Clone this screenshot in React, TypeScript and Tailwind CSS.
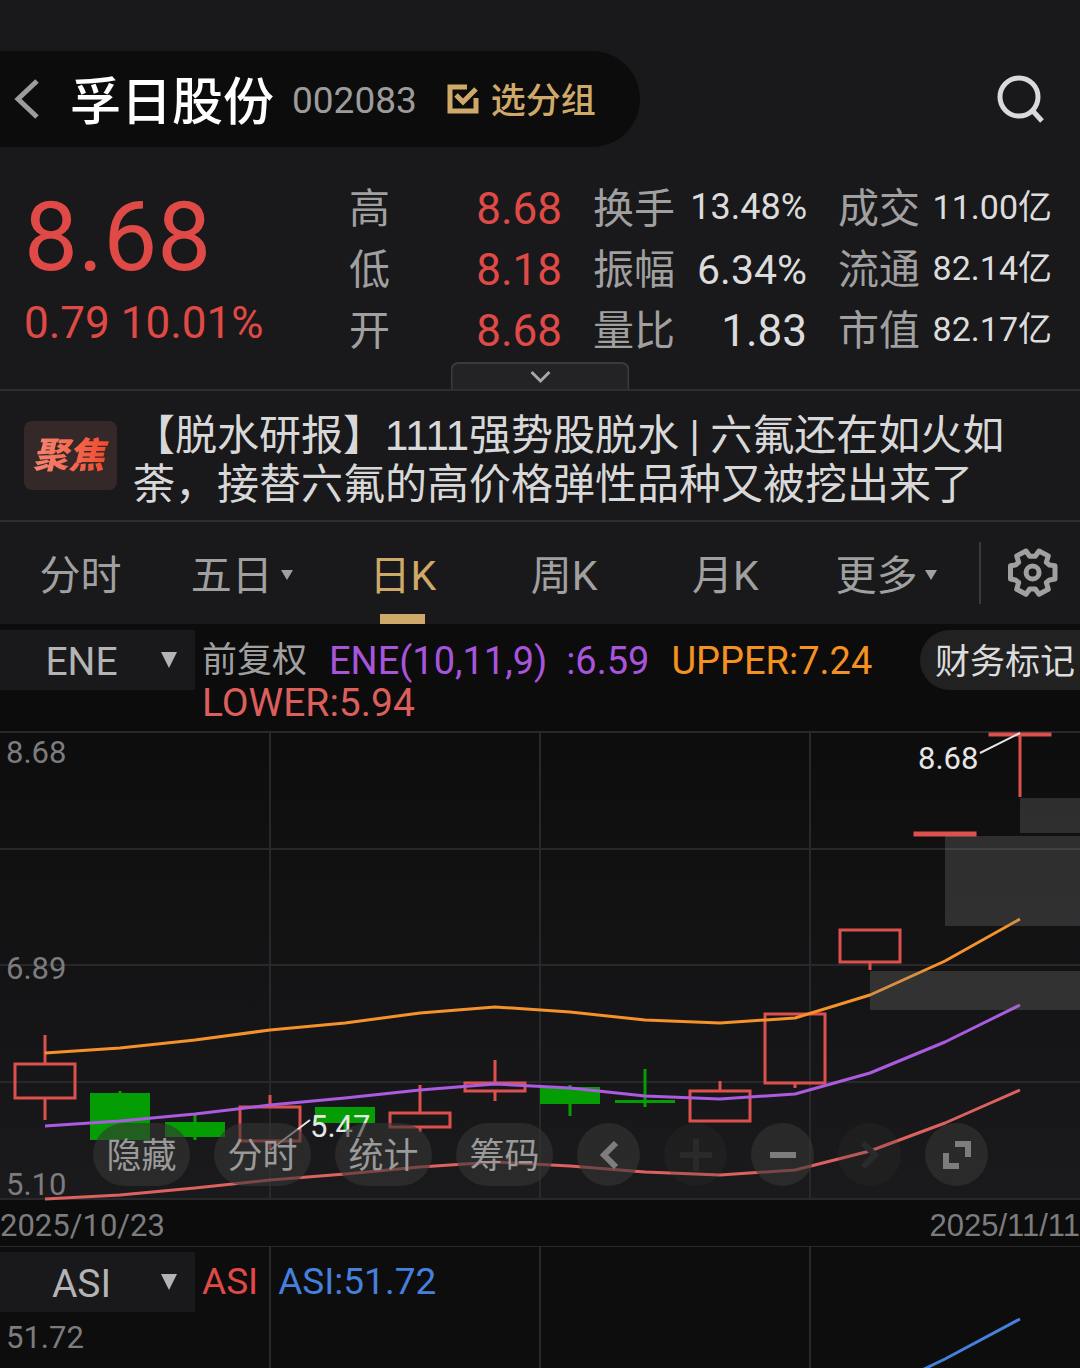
import { useState } from "react";

const stats = [
  [
    { label: "高", value: "8.68", size: "text-[44px]", tone: "text-[#e04a46]" },
    { label: "换手", value: "13.48%", size: "text-[36px]", tone: "text-[#dcdcdc]" },
    { label: "成交", value: "11.00亿", size: "text-[34px]", tone: "text-[#dcdcdc]" },
  ],
  [
    { label: "低", value: "8.18", size: "text-[44px]", tone: "text-[#e04a46]" },
    { label: "振幅", value: "6.34%", size: "text-[41px]", tone: "text-[#dcdcdc]" },
    { label: "流通", value: "82.14亿", size: "text-[34px]", tone: "text-[#dcdcdc]" },
  ],
  [
    { label: "开", value: "8.68", size: "text-[44px]", tone: "text-[#e04a46]" },
    { label: "量比", value: "1.83", size: "text-[44px]", tone: "text-[#dcdcdc]" },
    { label: "市值", value: "82.17亿", size: "text-[34px]", tone: "text-[#dcdcdc]" },
  ],
];

const tabs = [
  { label: "分时", menu: false },
  { label: "五日", menu: true },
  { label: "日K", menu: false },
  { label: "周K", menu: false },
  { label: "月K", menu: false },
  { label: "更多", menu: true },
];

type Candle = { x: number; top: number; bottom: number; high: number; low: number; up: boolean };

const candles: Candle[] = [
  { x: 45, top: 332, bottom: 366, high: 303, low: 388, up: true },
  { x: 120, top: 361, bottom: 408, high: 359, low: 408, up: false },
  { x: 195, top: 390, bottom: 405, high: 383, low: 408, up: false },
  { x: 270, top: 375, bottom: 409, high: 363, low: 418, up: true },
  { x: 345, top: 375, bottom: 391, high: 375, low: 399, up: false },
  { x: 420, top: 381, bottom: 395, high: 353, low: 400, up: true },
  { x: 495, top: 351, bottom: 359, high: 328, low: 369, up: true },
  { x: 570, top: 355, bottom: 372, high: 353, low: 384, up: false },
  { x: 645, top: 368, bottom: 371, high: 337, low: 375, up: false },
  { x: 720, top: 359, bottom: 389, high: 349, low: 389, up: true },
  { x: 795, top: 282, bottom: 351, high: 282, low: 356, up: true },
  { x: 870, top: 198, bottom: 230, high: 198, low: 238, up: true },
  { x: 945, top: 101, bottom: 103, high: 101, low: 103, up: true },
  { x: 1020, top: 2, bottom: 3, high: 2, low: 65, up: true },
];

const upper = [321, 316, 308, 298, 291, 281, 275, 280, 288, 291, 286, 263, 229, 187];
const middle = [394, 389, 382, 373, 366, 358, 352, 356, 364, 367, 362, 341, 310, 273];
const lower = [467, 463, 456, 448, 442, 435, 430, 434, 440, 443, 438, 419, 391, 358];

const toPoints = (ys: number[]) => ys.map((y, i) => `${45 + i * 75},${y}`).join(" ");

function CandleShape({ c }: { c: Candle }) {
  if (!c.up) {
    return (
      <g fill="#049d04">
        <rect x={c.x - 30} y={c.top} width={60} height={c.bottom - c.top} />
        <rect x={c.x - 1.5} y={c.high} width={3} height={c.low - c.high} />
      </g>
    );
  }
  return (
    <g fill="none" stroke="#dc504d" strokeWidth={3}>
      <rect x={c.x - 30} y={c.top} width={60} height={c.bottom - c.top} />
      {c.high < c.top && <path d={`M${c.x} ${c.high}V${c.top}`} />}
      {c.low > c.bottom && <path d={`M${c.x} ${c.bottom}V${c.low}`} />}
    </g>
  );
}

function PriceChart() {
  return (
    <svg viewBox="0 0 1080 468" className="block w-full overflow-visible" role="img" aria-label="日K">
      <defs>
        <linearGradient id="shade" x1="0" y1="0" x2="0" y2="1">
          <stop offset="0" stopColor="#0d0d0e" />
          <stop offset="1" stopColor="#1a1a1c" />
        </linearGradient>
      </defs>
      <rect width="1080" height="468" fill="url(#shade)" />
      <g stroke="#28282a" strokeWidth="2">
        <path d="M0 0H1080M0 117H1080M0 233H1080M0 350H1080M0 467H1080" />
        <path d="M270 0V468M540 0V468M810 0V468" />
      </g>
      {candles.map((c) => (
        <CandleShape key={c.x} c={c} />
      ))}
      <g fill="none" strokeWidth="3" strokeLinejoin="round">
        <polyline points={toPoints(upper)} stroke="#f5922a" />
        <polyline points={toPoints(middle)} stroke="#ab5be0" />
        <polyline points={toPoints(lower)} stroke="#dd615f" />
      </g>
      <g fill="#8c8c8c" fillOpacity="0.25">
        <rect x="1020" y="66" width="60" height="35" />
        <rect x="945" y="104" width="135" height="90" />
        <rect x="870" y="239" width="210" height="39" />
      </g>
      <g stroke="#e6e6e6" strokeWidth="2">
        <path d="M980 21L1020 1M310 388L270 418" />
      </g>
      <g className="text-[31px]" fill="#e6e6e6">
        <text x="918" y="37">8.68</text>
        <text x="310" y="405">5.47</text>
      </g>
      <g className="text-[31px]" fill="#7c7c7e">
        <text x="6" y="31">8.68</text>
        <text x="6" y="247">6.89</text>
        <text x="6" y="463">5.10</text>
      </g>
    </svg>
  );
}

function IndicatorSelect({ value, options }: { value: string; options: string[] }) {
  return (
    <div className="relative h-[60px] w-[195px] shrink-0 bg-[#19191b] text-[#b4b4b4]">
      <select
        aria-label={`${value} 指标`}
        defaultValue={value}
        className="h-full w-full appearance-none bg-transparent pt-1 pr-8 text-center text-[39px] leading-[56px] outline-none"
      >
        {options.map((o) => (
          <option key={o}>{o}</option>
        ))}
      </select>
      <svg viewBox="0 0 16 16" className="pointer-events-none absolute top-[22px] right-[18px] size-4" fill="currentColor">
        <path d="M0 0H16L8 16Z" />
      </svg>
    </div>
  );
}

const roundButton = "flex size-[63px] items-center justify-center rounded-full bg-[#353535]/60 text-[#7d7d7d]";
const fadedButton = "flex size-[63px] items-center justify-center rounded-full bg-[#353535]/20 text-[#2a2a2b]";

export default function App() {
  const [active, setActive] = useState("日K");
  return (
    <main className="min-h-screen w-full overflow-hidden bg-[#19191b] pt-[51px] font-['Roboto','Noto_Sans_CJK_SC',sans-serif] text-[#a0a0a0]">
      <header className="flex h-24 items-center justify-between pr-9">
        <div className="flex h-full w-[640px] items-center rounded-r-full bg-[#0c0c0c] pl-3.5">
          <button aria-label="返回">
            <svg viewBox="0 0 26 40" className="h-10 w-[26px]" fill="none" stroke="#9c9c9c" strokeWidth="5">
              <path d="M23 2L4 20L23 38" />
            </svg>
          </button>
          <h1 className="ml-[30px] pt-2 text-[51px] font-medium text-white">孚日股份</h1>
          <span className="ml-[18px] pt-1 text-[37px] text-[#9c9c9c]">002083</span>
          <button className="ml-[30px] flex items-center gap-3 text-[35px] font-medium text-[#cfa969]">
            <svg viewBox="0 0 32 32" className="size-8" fill="none" stroke="currentColor" strokeWidth="5">
              <path d="M20 4H3V28H29V15" />
              <path d="M9 12L16 19L29 6" />
            </svg>
            <span className="pt-1.5">选分组</span>
          </button>
        </div>
        <button aria-label="搜索">
          <svg viewBox="0 0 48 48" className="size-12" fill="none" stroke="#dadada" strokeWidth="5">
            <circle cx="23" cy="22" r="19" />
            <path d="M36 35L46 46" />
          </svg>
        </button>
      </header>

      <section className="relative flex h-[244px] border-b-2 border-[#2e2e30] pt-[31px] pr-7 pl-6">
        <div className="w-[325px] text-[#e04a46]">
          <p className="text-[96px] leading-[118px]">8.68</p>
          <p className="text-[44px] leading-[54px]">0.79 10.01%</p>
        </div>
        <dl className="flex-1">
          {stats.map((row) => (
            <div key={row[0].label} className="grid h-[61px] grid-cols-[213fr_214fr_214fr] items-center gap-x-[31px]">
              {row.map((s) => (
                <div key={s.label} className="flex items-start justify-between whitespace-nowrap">
                  <dt className="text-[41px] leading-[60px]">{s.label}</dt>
                  <dd className={`${s.size} ${s.tone} ${s.size === "text-[34px]" || s.size === "text-[36px]" ? "leading-[56px]" : "leading-[60px]"}`}>
                    {s.value}
                  </dd>
                </div>
              ))}
            </div>
          ))}
        </dl>
        <button
          aria-label="展开"
          className="absolute bottom-0 left-1/2 flex h-[27px] w-[179px] -translate-x-1/2 items-center justify-center rounded-t-lg border-2 border-b-0 border-[#3a3a3c] bg-[#232325]"
        >
          <svg viewBox="0 0 20 14" className="h-3.5 w-5" fill="none" stroke="#a8a8a8" strokeWidth="3">
            <path d="M1 2L10 11L19 2" />
          </svg>
        </button>
      </section>

      <a href="#news" className="flex h-[131px] items-center gap-4 border-b-2 border-[#2e2e30] px-6">
        <span className="flex h-[69px] w-[93px] shrink-0 items-center justify-center rounded-lg bg-[#342829]">
          <span className="bg-linear-to-r from-[#f58a78] to-[#f04423] bg-clip-text pr-2 pl-1 text-[36px] font-black text-transparent italic">
            聚焦
          </span>
        </span>
        <span className="pt-2 text-[42px] leading-[49px] text-[#d8d8d8]">
          【脱水研报】<span className="font-['Liberation_Sans',sans-serif]">1111</span>强势股脱水 | 六氟还在如火如荼，接替六氟的高价格弹性品种又被挖出来了
        </span>
      </a>

      <nav className="flex h-[102px] items-stretch">
        <div className="flex flex-1 pr-3">
          {tabs.map((t) => (
            <button
              key={t.label}
              onClick={() => setActive(t.label)}
              className={`relative flex flex-1 items-center justify-center gap-2 pt-2 text-[41px] ${active === t.label ? "text-[#cfa969]" : ""}`}
            >
              {t.label}
              {t.menu && (
                <svg viewBox="0 0 12 10" className="mb-1 h-2.5 w-3" fill="currentColor">
                  <path d="M0 0H12L6 10Z" />
                </svg>
              )}
              {active === t.label && <span className="absolute bottom-0 h-2.5 w-[45px] bg-[#cfa969]" />}
            </button>
          ))}
        </div>
        <button
          aria-label="设置"
          className="my-5 flex w-[101px] items-center justify-center border-l-2 border-[#3a3a3c] pl-1"
        >
          <svg viewBox="0 0 50 50" className="size-[50px]" fill="none" stroke="currentColor" strokeWidth="5" strokeLinejoin="round">
            <path d="M18 3L21.7 8.3H27.3L31 3L40.3 7.9L38.3 14.3L41.5 17L47 17.7V31L41.5 32L38.3 34.5L40.3 41.3L31 46.3L27.3 41H21.7L18 46.3L8.7 41.3L10.7 34.5L7.5 32L2.5 31V17.7L7.5 17L10.7 14.3L8.7 7.9Z" />
            <circle cx="24.6" cy="24.5" r="6.5" />
          </svg>
        </button>
      </nav>

      <section className="flex h-[108px] items-start bg-[#0c0c0d] pt-1.5">
        <IndicatorSelect value="ENE" options={["ENE", "MA", "BOLL"]} />
        <p className="ml-[7px] flex flex-1 flex-wrap gap-x-[22px] pt-2.5 text-[38px] leading-[42px] whitespace-nowrap">
          <span className="text-[35px]">前复权</span>
          <span className="text-[#a855dc]">ENE(10,11,9)&nbsp; :6.59</span>
          <span className="text-[#f59120]">UPPER:7.24</span>
          <span className="text-[39px] text-[#dc5f5c]">LOWER:5.94</span>
        </p>
        <button className="h-[60px] w-40 shrink-0 overflow-hidden rounded-l-full bg-[#212121] pt-1.5 pl-[15px] text-left text-[35px] whitespace-nowrap text-[#dcdcdc]">
          财务标记
        </button>
      </section>

      <section className="relative">
        <PriceChart />
        <div className="absolute bottom-3.5 left-[93px] flex gap-6">
          {["隐藏", "分时", "统计", "筹码"].map((b) => (
            <button key={b} className="h-[63px] w-[97px] rounded-full bg-[#353535]/60 pt-1.5 text-[35px] text-[#9a9a9a]">
              {b}
            </button>
          ))}
          <button aria-label="向左" className={roundButton}>
            <svg viewBox="0 0 20 28" className="h-7 w-5" fill="none" stroke="currentColor" strokeWidth="6">
              <path d="M17 2L5 14L17 26" />
            </svg>
          </button>
          <button aria-label="放大" className={fadedButton}>
            <svg viewBox="0 0 32 32" className="size-8" fill="none" stroke="currentColor" strokeWidth="6">
              <path d="M16 0V32M0 16H32" />
            </svg>
          </button>
          <button aria-label="缩小" className={roundButton}>
            <svg viewBox="0 0 26 6" className="h-1.5 w-[26px]" fill="currentColor">
              <path d="M0 0H26V6H0Z" />
            </svg>
          </button>
          <button aria-label="向右" className={fadedButton}>
            <svg viewBox="0 0 20 28" className="h-7 w-5" fill="none" stroke="currentColor" strokeWidth="6">
              <path d="M3 2L15 14L3 26" />
            </svg>
          </button>
          <button aria-label="全屏" className={roundButton}>
            <svg viewBox="0 0 30 30" className="size-[30px]" fill="none" stroke="currentColor" strokeWidth="6">
              <path d="M13 4H26V17M4 13V26H17" />
            </svg>
          </button>
        </div>
      </section>

      <div className="flex h-[46px] items-center justify-between bg-[#0c0c0d] pt-1.5 text-[31px] text-[#7c7c7e]">
        <time>2025/10/23</time>
        <time className="font-['Liberation_Sans',sans-serif]">2025/11/11</time>
      </div>

      <section className="relative h-[122px] bg-[#0d0d0e]">
        <svg viewBox="0 0 1080 122" className="absolute inset-x-0 top-0 w-full" role="img" aria-label="ASI">
          <path d="M0 0H1080M270 0V122M540 0V122M810 0V122" stroke="#28282a" strokeWidth="2" />
          <path d="M920 125L945 113L1020 73" fill="none" stroke="#4480dc" strokeWidth="3" />
        </svg>
        <div className="relative flex items-center pt-1.5 text-[37px]">
          <IndicatorSelect value="ASI" options={["ASI", "MACD", "KDJ"]} />
          <span className="ml-[7px] text-[#e04a46]">ASI</span>
          <span className="ml-5 text-[#4480dc]">ASI:51.72</span>
        </div>
        <p className="relative pl-1.5 text-[31px] leading-[52px] text-[#7c7c7e]">51.72</p>
      </section>
    </main>
  );
}
